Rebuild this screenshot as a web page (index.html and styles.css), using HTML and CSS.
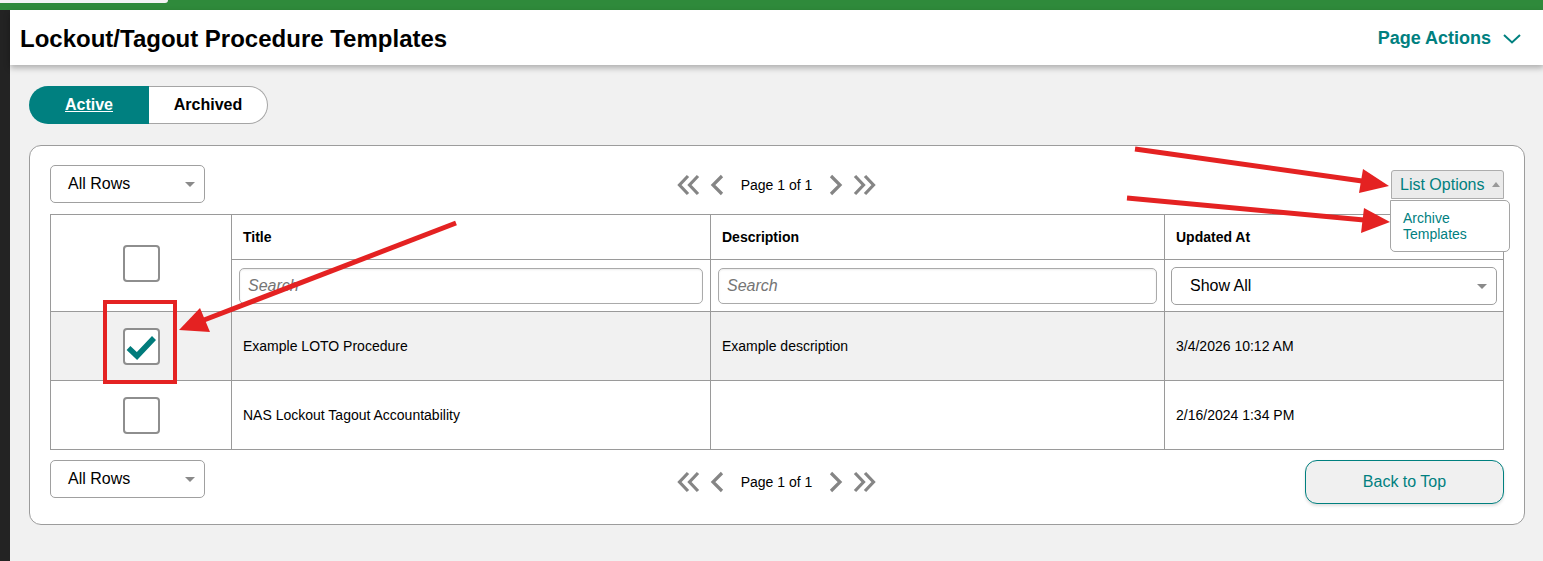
FILE: index.html
```html
<!DOCTYPE html>
<html>
<head>
<meta charset="utf-8">
<link rel="stylesheet" href="styles.css">
</head>
<body>
<div class="topbar"><div class="toptab"></div></div>
<div class="main">
  <div class="leftstrip"></div>
  <div class="content">
    <header class="header">
      <h1 class="title">Lockout/Tagout Procedure Templates</h1>
      <div class="page-actions">Page Actions
        <svg class="pa-chev" width="18" height="10" viewBox="0 0 18 10"><polyline points="1,1 9,8.5 17,1" fill="none" stroke="#00807f" stroke-width="2"/></svg>
      </div>
    </header>
    <div class="body">
      <div class="toggle">
        <div class="tg tg-active">Active</div>
        <div class="tg tg-arch">Archived</div>
      </div>
      <div class="card">
        <div class="toolbar">
          <div class="left"><div class="select rows">All Rows<span class="caret"></span></div></div>
          <div class="pager">
            <svg width="23" height="22" viewBox="0 0 23 22"><polyline points="11,2 2.5,11 11,20" fill="none" stroke="#858585" stroke-width="3.2"/><polyline points="21,2 12.5,11 21,20" fill="none" stroke="#858585" stroke-width="3.2"/></svg>
            <svg class="p-single" width="14" height="22" viewBox="0 0 14 22"><polyline points="12,2 3,11 12,20" fill="none" stroke="#858585" stroke-width="3.2"/></svg>
            <span class="p-text">Page 1 of 1</span>
            <svg class="p-single" width="14" height="22" viewBox="0 0 14 22"><polyline points="2,2 11,11 2,20" fill="none" stroke="#858585" stroke-width="3.2"/></svg>
            <svg width="23" height="22" viewBox="0 0 23 22"><polyline points="2,2 10.5,11 2,20" fill="none" stroke="#858585" stroke-width="3.2"/><polyline points="12,2 20.5,11 12,20" fill="none" stroke="#858585" stroke-width="3.2"/></svg>
          </div>
          <div class="right">
            <div class="listopts">
              <div class="lo-btn">List Options<span class="upcaret"></span></div>
              <div class="lo-menu">Archive<br>Templates</div>
            </div>
          </div>
        </div>
        <table class="grid">
          <colgroup><col class="c0"><col class="c1"><col class="c2"><col class="c3"></colgroup>
          <tr class="hrow">
            <td rowspan="2" class="chk"><div class="cb"></div></td>
            <th>Title</th><th>Description</th><th>Updated At</th>
          </tr>
          <tr class="srow">
            <td><div class="search">Search</div></td>
            <td><div class="search">Search</div></td>
            <td class="sa"><div class="select showall">Show All<span class="caret"></span></div></td>
          </tr>
          <tr class="drow sel">
            <td class="chk"><div class="cb checked"><svg width="32" height="32" viewBox="0 0 32 32"><polyline points="3.5,18 12,26 29,8" fill="none" stroke="#007b7b" stroke-width="5.5"/></svg></div></td>
            <td>Example LOTO Procedure</td><td>Example description</td><td>3/4/2026 10:12 AM</td>
          </tr>
          <tr class="drow">
            <td class="chk"><div class="cb"></div></td>
            <td>NAS Lockout Tagout Accountability</td><td></td><td>2/16/2024 1:34 PM</td>
          </tr>
        </table>
        <div class="toolbar bottom">
          <div class="left"><div class="select rows">All Rows<span class="caret"></span></div></div>
          <div class="pager">
            <svg width="23" height="22" viewBox="0 0 23 22"><polyline points="11,2 2.5,11 11,20" fill="none" stroke="#858585" stroke-width="3.2"/><polyline points="21,2 12.5,11 21,20" fill="none" stroke="#858585" stroke-width="3.2"/></svg>
            <svg class="p-single" width="14" height="22" viewBox="0 0 14 22"><polyline points="12,2 3,11 12,20" fill="none" stroke="#858585" stroke-width="3.2"/></svg>
            <span class="p-text">Page 1 of 1</span>
            <svg class="p-single" width="14" height="22" viewBox="0 0 14 22"><polyline points="2,2 11,11 2,20" fill="none" stroke="#858585" stroke-width="3.2"/></svg>
            <svg width="23" height="22" viewBox="0 0 23 22"><polyline points="2,2 10.5,11 2,20" fill="none" stroke="#858585" stroke-width="3.2"/><polyline points="12,2 20.5,11 12,20" fill="none" stroke="#858585" stroke-width="3.2"/></svg>
          </div>
          <div class="right"><div class="btt">Back to Top</div></div>
        </div>
      </div>
    </div>
  </div>
</div>
<svg class="annot" width="1543" height="561" viewBox="0 0 1543 561">
  <g stroke="#e42222" fill="#e42222">
    <line x1="1135" y1="149" x2="1362" y2="181" stroke-width="5"/>
    <polygon points="1389,186 1359,193 1363,169" stroke="none"/>
    <line x1="1127" y1="198" x2="1364" y2="220" stroke-width="5"/>
    <polygon points="1390,222 1361,233 1364,208" stroke="none"/>
    <line x1="456" y1="223" x2="204" y2="320" stroke-width="5"/>
    <polygon points="179,330 200,308 210,332" stroke="none"/>
    <rect x="105" y="302" width="70" height="80" fill="none" stroke-width="4"/>
  </g>
</svg>
</body>
</html>
```

FILE: styles.css
```css
* { box-sizing: border-box; }
html, body { margin: 0; padding: 0; }
body {
  width: 1543px;
  height: 561px;
  overflow: hidden;
  background: #f1f1f1;
  font-family: "Liberation Sans", Arial, sans-serif;
  color: #000;
  position: relative;
}
.topbar {
  height: 10px;
  background: #2f8a3b;
}
.toptab {
  width: 168px;
  height: 3px;
  background: #f4f4f4;
  border-bottom-right-radius: 6px;
}
.main {
  display: flex;
  height: 551px;
}
.leftstrip {
  width: 10px;
  flex: none;
  background: #232323;
}
.content {
  flex: 1;
}
.header {
  height: 55px;
  background: #fff;
  display: flex;
  align-items: center;
  justify-content: space-between;
  padding: 0 23px 0 10px;
  box-shadow: 0 3px 6px rgba(0,0,0,0.28);
  position: relative;
}
.title {
  margin: 0;
  font-size: 24px;
  font-weight: bold;
  padding-top: 2px;
}
.page-actions {
  color: #00807f;
  font-weight: bold;
  font-size: 18px;
  display: flex;
  align-items: center;
  gap: 12px;
  padding-top: 1px;
}
.pa-chev { margin-top: 2px; }
.body {
  padding: 21px 19px 0 19px;
}
.toggle {
  display: flex;
  height: 38px;
}
.tg {
  display: flex;
  align-items: center;
  justify-content: center;
  font-weight: bold;
  font-size: 16px;
}
.tg-active {
  width: 120px;
  background: #008080;
  color: #fff;
  text-decoration: underline;
  border-radius: 19px 0 0 19px;
}
.tg-arch {
  width: 119px;
  background: #fff;
  border: 1px solid #a5a5a5;
  border-left: none;
  border-radius: 0 19px 19px 0;
}
.card {
  margin-top: 21px;
  background: #fff;
  border: 1px solid #9c9c9c;
  border-radius: 12px;
  padding: 19px 20px 20px 20px;
  height: 380px;
}
.toolbar {
  display: grid;
  grid-template-columns: 1fr auto 1fr;
  align-items: start;
}
.toolbar .right { display: flex; justify-content: flex-end; }
.select {
  position: relative;
  height: 38px;
  border: 1px solid #a0a0a0;
  border-radius: 5px;
  font-size: 16px;
  display: flex;
  align-items: center;
  padding-left: 17px;
  background: #fff;
}
.select.rows { width: 155px; }
.caret {
  position: absolute;
  right: 9px;
  top: 16px;
  width: 0; height: 0;
  border-left: 5px solid transparent;
  border-right: 5px solid transparent;
  border-top: 5px solid #8a8a8a;
}
.pager {
  display: flex;
  align-items: center;
  height: 38px;
  padding-right: 1px;
  padding-top: 2px;
}
.toolbar.bottom .pager {
  height: 44px;
  padding-top: 0;
}
.p-single { margin-left: 10px; }
.p-text {
  font-size: 14px;
  margin: 0 17px 0 17px;
}
.p-text + .p-single { margin-left: 0; margin-right: 10px; }
.listopts {
  position: relative;
  margin-top: 5px;
}
.lo-btn {
  width: 113px;
  height: 29px;
  background: #ebebeb;
  border: 1px solid #adadad;
  border-radius: 3px 3px 0 0;
  color: #00807f;
  font-size: 16px;
  display: flex;
  align-items: center;
  padding-left: 8px;
  position: relative;
}
.upcaret {
  position: absolute;
  right: 3px;
  top: 11px;
  width: 0; height: 0;
  border-left: 4px solid transparent;
  border-right: 4px solid transparent;
  border-bottom: 5px solid #999;
}
.lo-menu {
  position: absolute;
  top: 30px;
  left: -1px;
  width: 120px;
  height: 52px;
  background: #fff;
  border: 1px solid #a5a5a5;
  border-radius: 0 5px 5px 5px;
  color: #00807f;
  font-size: 14px;
  line-height: 16px;
  padding: 9px 12px;
  z-index: 2;
}
.grid {
  margin-top: 11px;
  width: 1453px;
  border-collapse: collapse;
  table-layout: fixed;
}
.c0 { width: 181px; }
.c1 { width: 479px; }
.c2 { width: 454px; }
.c3 { width: 339px; }
.grid td, .grid th {
  border: 1px solid #9a9a9a;
  padding: 0 11px;
  font-size: 14px;
  text-align: left;
  vertical-align: middle;
}
.grid th {
  font-size: 14px;
  font-weight: bold;
  height: 45px;
  padding-top: 0;
}
.grid td.chk { padding: 0; text-align: center; }
.srow td { height: 52px; padding: 0 7px; }
.search {
  height: 36px;
  border: 1px solid #aaa;
  border-radius: 5px;
  font-size: 16px;
  font-style: italic;
  color: #757575;
  display: flex;
  align-items: center;
  padding-left: 8px;
  box-shadow: inset 0 1px 2px rgba(0,0,0,0.08);
}
.srow td.sa { padding: 0 6px 0 6px; }
.select.showall { width: 100%; padding-left: 18px; }
.drow td { height: 69px; }
.drow.sel td { background: #f1f1f1; }
.cb {
  display: inline-flex;
  align-items: center;
  justify-content: center;
  width: 37px;
  height: 37px;
  border: 2px solid #8e8e8e;
  border-radius: 4px;
  background: #fff;
  vertical-align: middle;
}
.cb svg { display: block; }
.toolbar.bottom { margin-top: 10px; }
.btt {
  width: 199px;
  height: 44px;
  border: 1px solid #00807f;
  border-radius: 12px;
  background: #f0f0f0;
  color: #00807f;
  font-size: 16px;
  display: flex;
  align-items: center;
  justify-content: center;
  box-shadow: 0 2px 3px rgba(0,0,0,0.12);
}
.annot {
  position: absolute;
  top: 0;
  left: 0;
  pointer-events: none;
  z-index: 5;
}
```
